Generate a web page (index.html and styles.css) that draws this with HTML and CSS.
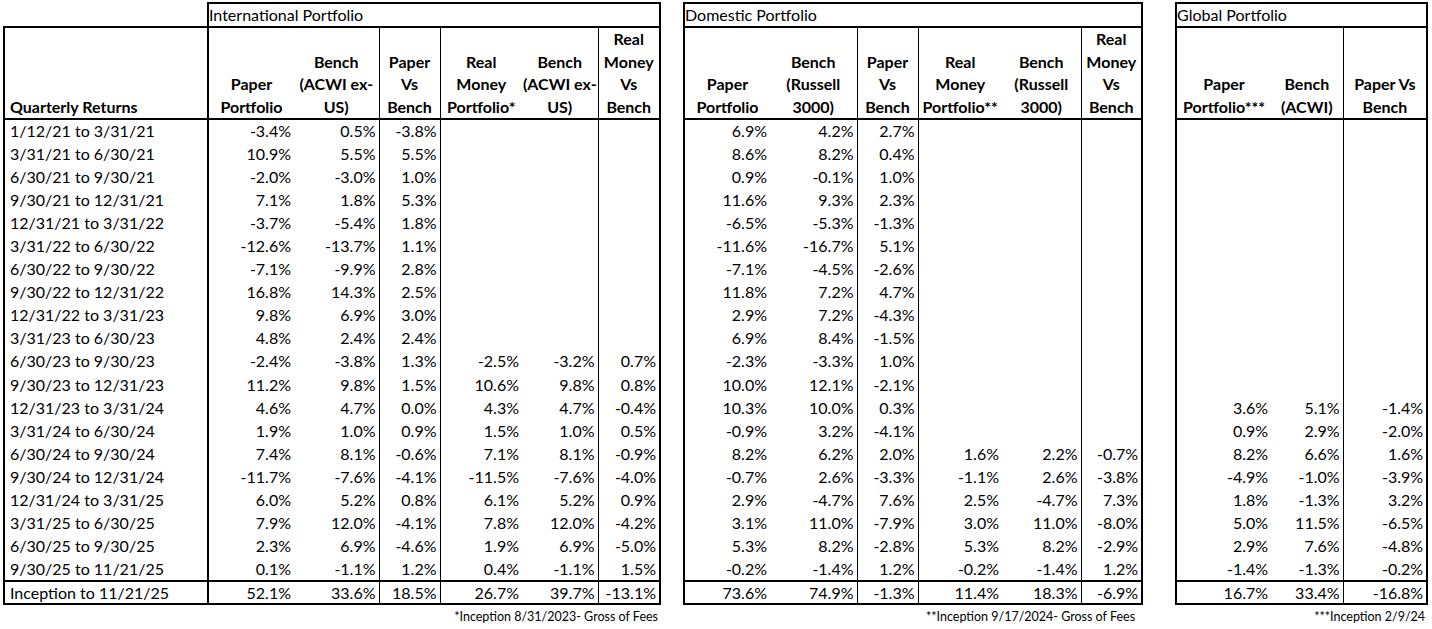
FILE: index.html
```html
<!DOCTYPE html>
<html lang="en">
<head>
<meta charset="utf-8">
<title>Portfolio Quarterly Returns</title>
<link rel="stylesheet" href="styles.css">
</head>
<body>
<main class="sheet">
  <section class="block">
    <table class="returns returns-intl">
      <colgroup>
        <col class="col-label">
        <col>
        <col class="line-thin">
        <col class="line-thin">
        <col>
        <col class="line-thin">
        <col class="line-end">
      </colgroup>
      <thead>
        <tr class="row-group">
          <th class="corner"></th>
          <th class="group-title" colspan="6">International Portfolio</th>
        </tr>
        <tr class="row-head">
          <th class="head-label">Quarterly Returns</th>
          <th>Paper<br>Portfolio</th>
          <th>Bench<br>(ACWI ex-<br>US)</th>
          <th>Paper<br>Vs<br>Bench</th>
          <th>Real<br>Money<br>Portfolio*</th>
          <th>Bench<br>(ACWI ex-<br>US)</th>
          <th>Real<br>Money<br>Vs<br>Bench</th>
        </tr>
      </thead>
      <tbody>
        <tr><td class="label">1/12/21 to 3/31/21</td><td>-3.4%</td><td>0.5%</td><td>-3.8%</td><td></td><td></td><td></td></tr>
        <tr><td class="label">3/31/21 to 6/30/21</td><td>10.9%</td><td>5.5%</td><td>5.5%</td><td></td><td></td><td></td></tr>
        <tr><td class="label">6/30/21 to 9/30/21</td><td>-2.0%</td><td>-3.0%</td><td>1.0%</td><td></td><td></td><td></td></tr>
        <tr><td class="label">9/30/21 to 12/31/21</td><td>7.1%</td><td>1.8%</td><td>5.3%</td><td></td><td></td><td></td></tr>
        <tr><td class="label">12/31/21 to 3/31/22</td><td>-3.7%</td><td>-5.4%</td><td>1.8%</td><td></td><td></td><td></td></tr>
        <tr><td class="label">3/31/22 to 6/30/22</td><td>-12.6%</td><td>-13.7%</td><td>1.1%</td><td></td><td></td><td></td></tr>
        <tr><td class="label">6/30/22 to 9/30/22</td><td>-7.1%</td><td>-9.9%</td><td>2.8%</td><td></td><td></td><td></td></tr>
        <tr><td class="label">9/30/22 to 12/31/22</td><td>16.8%</td><td>14.3%</td><td>2.5%</td><td></td><td></td><td></td></tr>
        <tr><td class="label">12/31/22 to 3/31/23</td><td>9.8%</td><td>6.9%</td><td>3.0%</td><td></td><td></td><td></td></tr>
        <tr><td class="label">3/31/23 to 6/30/23</td><td>4.8%</td><td>2.4%</td><td>2.4%</td><td></td><td></td><td></td></tr>
        <tr><td class="label">6/30/23 to 9/30/23</td><td>-2.4%</td><td>-3.8%</td><td>1.3%</td><td>-2.5%</td><td>-3.2%</td><td>0.7%</td></tr>
        <tr><td class="label">9/30/23 to 12/31/23</td><td>11.2%</td><td>9.8%</td><td>1.5%</td><td>10.6%</td><td>9.8%</td><td>0.8%</td></tr>
        <tr><td class="label">12/31/23 to 3/31/24</td><td>4.6%</td><td>4.7%</td><td>0.0%</td><td>4.3%</td><td>4.7%</td><td>-0.4%</td></tr>
        <tr><td class="label">3/31/24 to 6/30/24</td><td>1.9%</td><td>1.0%</td><td>0.9%</td><td>1.5%</td><td>1.0%</td><td>0.5%</td></tr>
        <tr><td class="label">6/30/24 to 9/30/24</td><td>7.4%</td><td>8.1%</td><td>-0.6%</td><td>7.1%</td><td>8.1%</td><td>-0.9%</td></tr>
        <tr><td class="label">9/30/24 to 12/31/24</td><td>-11.7%</td><td>-7.6%</td><td>-4.1%</td><td>-11.5%</td><td>-7.6%</td><td>-4.0%</td></tr>
        <tr><td class="label">12/31/24 to 3/31/25</td><td>6.0%</td><td>5.2%</td><td>0.8%</td><td>6.1%</td><td>5.2%</td><td>0.9%</td></tr>
        <tr><td class="label">3/31/25 to 6/30/25</td><td>7.9%</td><td>12.0%</td><td>-4.1%</td><td>7.8%</td><td>12.0%</td><td>-4.2%</td></tr>
        <tr><td class="label">6/30/25 to 9/30/25</td><td>2.3%</td><td>6.9%</td><td>-4.6%</td><td>1.9%</td><td>6.9%</td><td>-5.0%</td></tr>
        <tr><td class="label">9/30/25 to 11/21/25</td><td>0.1%</td><td>-1.1%</td><td>1.2%</td><td>0.4%</td><td>-1.1%</td><td>1.5%</td></tr>
      </tbody>
      <tfoot>
        <tr class="row-total"><td class="label">Inception to 11/21/25</td><td>52.1%</td><td>33.6%</td><td>18.5%</td><td>26.7%</td><td>39.7%</td><td>-13.1%</td></tr>
      </tfoot>
    </table>
    <p class="note">*Inception 8/31/2023- Gross of Fees</p>
  </section>

  <section class="block block-dom">
    <table class="returns returns-dom">
      <colgroup>
        <col class="line-start">
        <col class="line-thin">
        <col class="line-thin">
        <col>
        <col class="line-thin">
        <col class="line-end">
      </colgroup>
      <thead>
        <tr class="row-group">
          <th class="group-title" colspan="6">Domestic Portfolio</th>
        </tr>
        <tr class="row-head">
          <th>Paper<br>Portfolio</th>
          <th>Bench<br>(Russell<br>3000)</th>
          <th>Paper<br>Vs<br>Bench</th>
          <th>Real<br>Money<br>Portfolio**</th>
          <th>Bench<br>(Russell<br>3000)</th>
          <th>Real<br>Money<br>Vs<br>Bench</th>
        </tr>
      </thead>
      <tbody>
        <tr><td>6.9%</td><td>4.2%</td><td>2.7%</td><td></td><td></td><td></td></tr>
        <tr><td>8.6%</td><td>8.2%</td><td>0.4%</td><td></td><td></td><td></td></tr>
        <tr><td>0.9%</td><td>-0.1%</td><td>1.0%</td><td></td><td></td><td></td></tr>
        <tr><td>11.6%</td><td>9.3%</td><td>2.3%</td><td></td><td></td><td></td></tr>
        <tr><td>-6.5%</td><td>-5.3%</td><td>-1.3%</td><td></td><td></td><td></td></tr>
        <tr><td>-11.6%</td><td>-16.7%</td><td>5.1%</td><td></td><td></td><td></td></tr>
        <tr><td>-7.1%</td><td>-4.5%</td><td>-2.6%</td><td></td><td></td><td></td></tr>
        <tr><td>11.8%</td><td>7.2%</td><td>4.7%</td><td></td><td></td><td></td></tr>
        <tr><td>2.9%</td><td>7.2%</td><td>-4.3%</td><td></td><td></td><td></td></tr>
        <tr><td>6.9%</td><td>8.4%</td><td>-1.5%</td><td></td><td></td><td></td></tr>
        <tr><td>-2.3%</td><td>-3.3%</td><td>1.0%</td><td></td><td></td><td></td></tr>
        <tr><td>10.0%</td><td>12.1%</td><td>-2.1%</td><td></td><td></td><td></td></tr>
        <tr><td>10.3%</td><td>10.0%</td><td>0.3%</td><td></td><td></td><td></td></tr>
        <tr><td>-0.9%</td><td>3.2%</td><td>-4.1%</td><td></td><td></td><td></td></tr>
        <tr><td>8.2%</td><td>6.2%</td><td>2.0%</td><td>1.6%</td><td>2.2%</td><td>-0.7%</td></tr>
        <tr><td>-0.7%</td><td>2.6%</td><td>-3.3%</td><td>-1.1%</td><td>2.6%</td><td>-3.8%</td></tr>
        <tr><td>2.9%</td><td>-4.7%</td><td>7.6%</td><td>2.5%</td><td>-4.7%</td><td>7.3%</td></tr>
        <tr><td>3.1%</td><td>11.0%</td><td>-7.9%</td><td>3.0%</td><td>11.0%</td><td>-8.0%</td></tr>
        <tr><td>5.3%</td><td>8.2%</td><td>-2.8%</td><td>5.3%</td><td>8.2%</td><td>-2.9%</td></tr>
        <tr><td>-0.2%</td><td>-1.4%</td><td>1.2%</td><td>-0.2%</td><td>-1.4%</td><td>1.2%</td></tr>
      </tbody>
      <tfoot>
        <tr class="row-total"><td>73.6%</td><td>74.9%</td><td>-1.3%</td><td>11.4%</td><td>18.3%</td><td>-6.9%</td></tr>
      </tfoot>
    </table>
    <p class="note note-dom">**Inception 9/17/2024- Gross of Fees</p>
  </section>

  <section class="block block-global">
    <table class="returns returns-global">
      <colgroup>
        <col class="line-start">
        <col class="line-thin">
        <col class="line-end">
      </colgroup>
      <thead>
        <tr class="row-group">
          <th class="group-title" colspan="3">Global Portfolio</th>
        </tr>
        <tr class="row-head">
          <th>Paper<br>Portfolio***</th>
          <th>Bench<br>(ACWI)</th>
          <th>Paper Vs<br>Bench</th>
        </tr>
      </thead>
      <tbody>
        <tr><td></td><td></td><td></td></tr>
        <tr><td></td><td></td><td></td></tr>
        <tr><td></td><td></td><td></td></tr>
        <tr><td></td><td></td><td></td></tr>
        <tr><td></td><td></td><td></td></tr>
        <tr><td></td><td></td><td></td></tr>
        <tr><td></td><td></td><td></td></tr>
        <tr><td></td><td></td><td></td></tr>
        <tr><td></td><td></td><td></td></tr>
        <tr><td></td><td></td><td></td></tr>
        <tr><td></td><td></td><td></td></tr>
        <tr><td></td><td></td><td></td></tr>
        <tr><td>3.6%</td><td>5.1%</td><td>-1.4%</td></tr>
        <tr><td>0.9%</td><td>2.9%</td><td>-2.0%</td></tr>
        <tr><td>8.2%</td><td>6.6%</td><td>1.6%</td></tr>
        <tr><td>-4.9%</td><td>-1.0%</td><td>-3.9%</td></tr>
        <tr><td>1.8%</td><td>-1.3%</td><td>3.2%</td></tr>
        <tr><td>5.0%</td><td>11.5%</td><td>-6.5%</td></tr>
        <tr><td>2.9%</td><td>7.6%</td><td>-4.8%</td></tr>
        <tr><td>-1.4%</td><td>-1.3%</td><td>-0.2%</td></tr>
      </tbody>
      <tfoot>
        <tr class="row-total"><td>16.7%</td><td>33.4%</td><td>-16.8%</td></tr>
      </tfoot>
    </table>
    <p class="note">***Inception 2/9/24</p>
  </section>
</main>
</body>
</html>
```

FILE: styles.css
```css
* {
  box-sizing: border-box;
}

html,
body {
  margin: 0;
  background: #ffffff;
}

body {
  width: 1432px;
  height: 629px;
  overflow: hidden;
  font-family: Lato, "Open Sans", "Liberation Sans", sans-serif;
  color: #000000;
}

.sheet {
  display: flex;
  align-items: flex-start;
  padding: 2px 0 0 3px;
}

.block {
  display: flex;
  flex-direction: column;
}

.block-dom {
  margin-left: 22px;
}

.block-global {
  margin-left: 32px;
}

/* ---------- tables ---------- */

.returns {
  border-collapse: collapse;
  table-layout: fixed;
  font-size: 16px;
}

.returns-intl {
  width: 658px;
}

.returns-dom {
  width: 460px;
}

.returns-global {
  width: 253px;
}

.returns-intl col:nth-child(1) { width: 204px; }
.returns-intl col:nth-child(2) { width: 86px; }
.returns-intl col:nth-child(3) { width: 85px; }
.returns-intl col:nth-child(4) { width: 61px; }
.returns-intl col:nth-child(5) { width: 82px; }
.returns-intl col:nth-child(6) { width: 76px; }
.returns-intl col:nth-child(7) { width: 62px; }

.returns-dom col:nth-child(1) { width: 86px; }
.returns-dom col:nth-child(2) { width: 87px; }
.returns-dom col:nth-child(3) { width: 61px; }
.returns-dom col:nth-child(4) { width: 84px; }
.returns-dom col:nth-child(5) { width: 79px; }
.returns-dom col:nth-child(6) { width: 61px; }

.returns-global col:nth-child(1) { width: 95px; }
.returns-global col:nth-child(2) { width: 72px; }
.returns-global col:nth-child(3) { width: 84px; }

/* column rules */
.col-label {
  border-left: 2px solid #000;
  border-right: 2px solid #000;
}

.line-start {
  border-left: 2px solid #000;
}

.line-thin {
  border-right: 1px solid #000;
}

.line-end {
  border-right: 2px solid #000;
}

/* ---------- cells ---------- */

.returns th,
.returns td {
  padding: 0 3px 0 0;
  white-space: nowrap;
  overflow: hidden;
}

.returns td {
  text-align: right;
  vertical-align: middle;
  line-height: 20px;
  font-weight: 400;
}

.returns td.label {
  text-align: left;
  padding: 0 0 0 5px;
}

.row-group {
  height: 24px;
}

.corner {
  border-top: hidden;
  border-left: hidden;
}

.group-title {
  border: 2px solid #000;
  font-weight: 400;
  text-align: left;
  vertical-align: middle;
  padding: 0 0 2px 4px;
  line-height: 20px;
}

.row-head {
  height: 92px;
}

.row-head th {
  border-top: 2px solid #000;
  border-bottom: 2px solid #000;
  font-weight: 700;
  text-align: center;
  vertical-align: bottom;
  line-height: 22.5px;
  padding: 0;
}

.row-head th.head-label {
  text-align: left;
  padding-left: 5px;
}

tbody tr {
  height: 23.1px;
}

.row-total {
  height: 23.5px;
}

.row-total td {
  border-top: 2px solid #000;
  border-bottom: 2px solid #000;
}

/* ---------- footnotes ---------- */

.note {
  margin: 4px 0 0;
  padding-right: 3px;
  font-size: 12.5px;
  line-height: 16px;
  text-align: right;
}

.note-dom {
  padding-right: 8px;
}
```
